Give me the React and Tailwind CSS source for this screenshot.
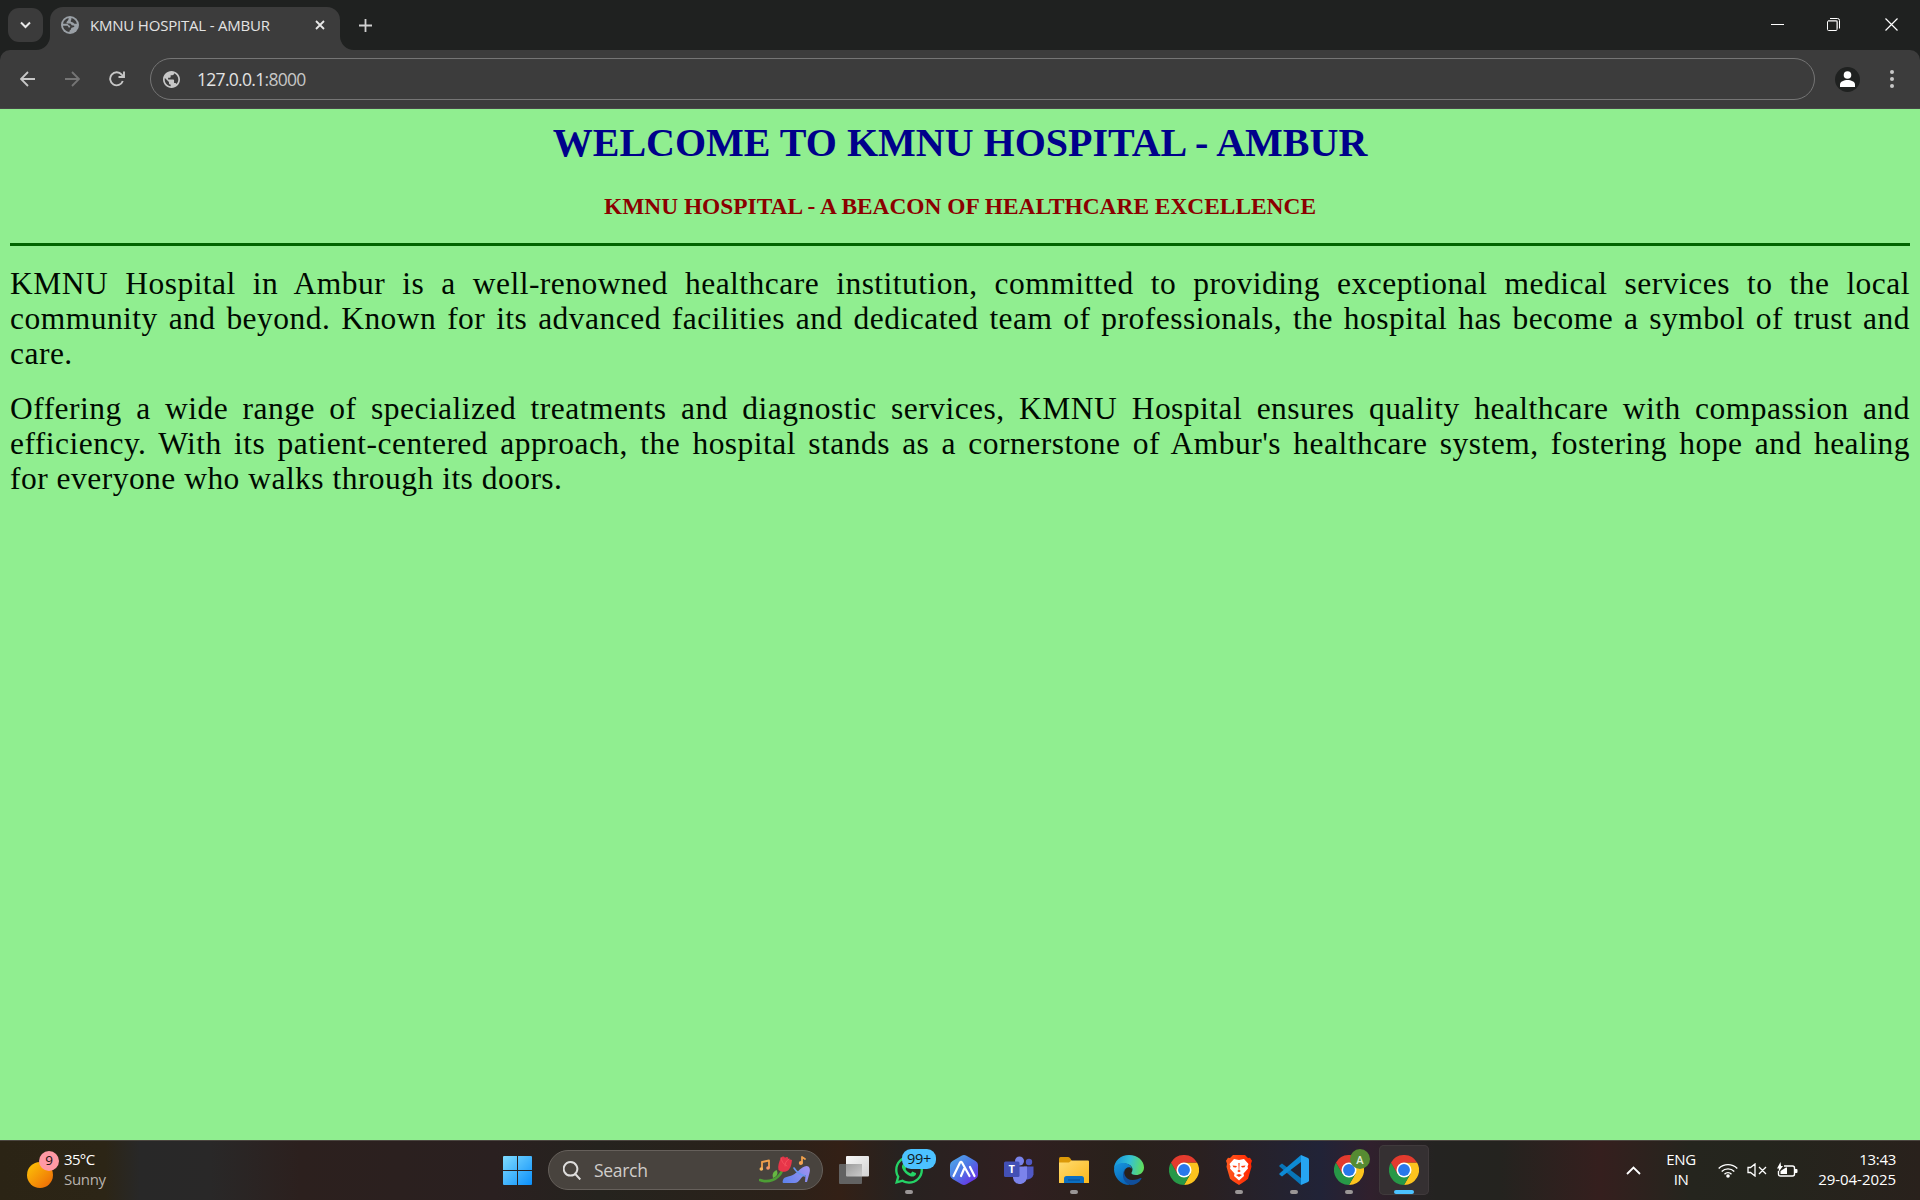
import React from "react";
import { FaWhatsapp } from "react-icons/fa";

const ui = "font-['Open_Sans','Noto_Sans',sans-serif]";

function Globe({ className }) {
  return (
    <svg viewBox="2 2 20 20" className={className} fill="currentColor">
      <path d="M12 2C6.48 2 2 6.48 2 12s4.48 10 10 10 10-4.48 10-10S17.52 2 12 2zm-1 17.93c-3.95-.49-7-3.85-7-7.93 0-.62.08-1.21.21-1.79L9 15v1c0 1.1.9 2 2 2v1.93zm6.9-2.54c-.26-.81-1-1.39-1.9-1.39h-1v-3c0-.55-.45-1-1-1H8v-2h2c.55 0 1-.45 1-1V7h2c1.1 0 2-.9 2-2v-.41c2.93 1.19 5 4.06 5 7.41 0 2.08-.8 3.97-2.1 5.39z" />
    </svg>
  );
}

function TabGlobe() {
  return (
    <svg viewBox="0 0 18 18" className="h-[18px] w-[18px]">
      <circle cx="9" cy="9" r="9" fill="#9aa0a6" />
      <path d="M2 7.800C2.500 4.800 4.700 2.600 7.600 2.100c-.2 1.600-.1 2.300-1.600 3.300-.8.600-.6 1.700.2 2.100H9c1.300 0 1 1.600 2 1.800 1.400.2 2.200.2 2.400 1-.3 1.300-1.800 1-2.800 1.500-.8.500-.3 1.800-1.200 2.300-.7.400-1 .8-1 1.800C4.800 15.600 2.200 12.800 2 9.800h3.500c1.400 0 1.800.600 2 1.700h1.400c.7-.9.200-1.900-.7-2-.900-.2-1.200-1.700-2.300-1.700z" fill="#3c3c3c" />
      <path d="M10.400 2.100c2.800.6 4.900 2.700 5.500 5.600-1.500.3-2.600.2-3.300-.8-.5-.8-1.900-.4-2.700-1.100-.8-.8.900-1.700.5-3.700z" fill="#3c3c3c" />
    </svg>
  );
}

function Stroke({ d, className, box = "0 0 20 20", w = 2 }) {
  return (
    <svg viewBox={box} className={className} fill="none" stroke="currentColor" strokeWidth={w}>
      <path d={d} />
    </svg>
  );
}

function TitleBar() {
  return (
    <div className="flex h-[50px] items-end bg-[#1f2120]">
      <div className="mb-2 ml-2 flex h-[34px] w-[35px] items-center justify-center rounded-[11px] bg-[#3b3b3b] text-[#e8e8e8]">
        <Stroke d="M1 1.500 5.500 6 10 1.500" box="0 0 11 8" className="h-2 w-[11px]" />
      </div>
      <div className="relative ml-[7px] flex h-[43px] w-[290px] items-center rounded-t-[13px] bg-[#3c3c3c] pb-[7px]">
        <svg viewBox="0 0 14 14" className="absolute bottom-0 -left-[14px] h-[14px] w-[14px] fill-[#3c3c3c]"><path d="M14 0A14 14 0 0 1 0 14H14z" /></svg>
        <svg viewBox="0 0 14 14" className="absolute bottom-0 -right-[14px] h-[14px] w-[14px] fill-[#3c3c3c]"><path d="M0 0A14 14 0 0 0 14 14H0z" /></svg>
        <div className="ml-[11px]"><TabGlobe /></div>
        <span className="ml-[11px] w-[215px] whitespace-nowrap text-[15px] leading-5 tracking-[-0.2px] text-[#e3e3e3]">KMNU HOSPITAL - AMBUR</span>
        <Stroke d="M1 1 9 9M9 1 1 9" box="0 0 10 10" w={1.8} className="ml-[10px] h-[10px] w-[10px] text-[#e8e8e8]" />
      </div>
      <Stroke d="M6.500 0V13M0 6.500H13" box="0 0 13 13" w={1.8} className="mb-[18px] ml-[19px] h-[13px] w-[13px] text-[#d0d0d0]" />
      <div className="ml-auto mb-[19px] mr-[22px] flex items-center text-white">
        <div className="h-px w-[13px] bg-white" />
        <svg viewBox="0 0 13 13" className="ml-[43px] h-[13px] w-[13px]" fill="none" stroke="currentColor">
          <path d="M3 .5h7.500a2 2 0 0 1 2 2V10.500" />
          <path d="M10.500 3v7.500M1 2.500h9.500" stroke="#8d8d8d" />
          <rect x=".5" y="3" width="9.500" height="9.500" rx="1" />
        </svg>
        <Stroke d="M.5.5 12.500 12.500M12.500.5.5 12.500" box="0 0 13 13" w={1.2} className="ml-[45px] h-[13px] w-[13px]" />
      </div>
    </div>
  );
}

function Toolbar() {
  return (
    <div className="bg-[#1f2120]">
      <div className="flex h-[59px] items-center rounded-t-[10px] border-b border-[#474747] bg-[#3c3c3c]">
        <Stroke d="M15 8H1.500M8 1 1 8 8 15" box="0 0 16 16" w={1.8} className="ml-5 h-4 w-4 text-[#c7c7c7]" />
        <Stroke d="M1 8H14.500M8 1 15 8 8 15" box="0 0 16 16" w={1.8} className="ml-[28px] h-4 w-4 text-[#757575]" />
        <Stroke d="M13.800 10A6.500 6.500 0 1 1 12.700 3.700L14.600 5.600M15 .5V6H9.500" box="0 0 16 16" w={1.9} className="ml-[29px] h-4 w-4 text-[#c7c7c7]" />
        <div className="ml-[25px] flex h-[42px] w-[1665px] items-center rounded-full border border-[#757575] pl-3 text-[#c7c7c7]">
          <Globe className="h-[17px] w-[17px]" />
          <span className="ml-[17px] text-[17.5px] leading-6 tracking-[-0.7px] text-[#e3e3e3]">127.0.0.1<span className="text-[#c7c7c7]">:8000</span></span>
        </div>
        <div className="ml-5 flex h-[25px] w-[25px] items-center justify-center rounded-full bg-[#1f2120]">
          <svg viewBox="0 0 15 16" className="h-4 w-[15px] fill-white"><circle cx="7.500" cy="4" r="3.800" /><path d="M0 16v-2.500C0 10.500 4 9 7.500 9S15 10.500 15 13.500V16z" /></svg>
        </div>
        <svg viewBox="0 0 4 18" className="ml-[30px] h-[18px] w-1 fill-[#c7c7c7]"><circle cx="2" cy="2" r="2" /><circle cx="2" cy="9" r="2" /><circle cx="2" cy="16" r="2" /></svg>
      </div>
    </div>
  );
}

const paragraphs = [
  [
    "KMNU Hospital in Ambur is a well-renowned healthcare institution, committed to providing exceptional medical services to the local",
    "community and beyond. Known for its advanced facilities and dedicated team of professionals, the hospital has become a symbol of trust and",
    "care.",
  ],
  [
    "Offering a wide range of specialized treatments and diagnostic services, KMNU Hospital ensures quality healthcare with compassion and",
    "efficiency. With its patient-centered approach, the hospital stands as a cornerstone of Ambur's healthcare system, fostering hope and healing",
    "for everyone who walks through its doors.",
  ],
];

function Page() {
  return (
    <main className="h-[1031px] bg-[#90ee90] px-[10px] font-['Liberation_Serif',serif]">
      <h1 className="pt-[11px] text-center text-[40px] font-bold leading-[46px] text-[#00008b]">WELCOME TO KMNU HOSPITAL - AMBUR</h1>
      <h3 className="mt-[27px] text-center text-[23.4px] font-bold leading-[27px] text-[#8b0000]">KMNU HOSPITAL - A BEACON OF HEALTHCARE EXCELLENCE</h3>
      <hr className="mt-[23px] h-[3px] border-0 bg-[#006400]" />
      <div className="flex flex-col gap-5 pt-5">
        {paragraphs.map((lines, i) => (
          <p key={i} className="whitespace-nowrap text-[31.5px] leading-[35px] tracking-[0.48px] text-[#000a00]">
            {lines.map((line, j) => (
              <span key={j} className={j < 2 ? "block text-justify [text-align-last:justify]" : "block"}>{line}</span>
            ))}
          </p>
        ))}
      </div>
    </main>
  );
}

function Chrome() {
  return (
    <svg viewBox="0 0 48 48" className="h-[30px] w-[30px]">
      <path d="M24 12H44.800A24 24 0 0 1 24 48L34.400 30z" fill="#fcc31e" />
      <path d="M13.600 30 3.200 12A24 24 0 0 0 24 48L34.400 30z" fill="#279847" />
      <path d="M3.200 12 13.600 30 24 24V12H44.800A24 24 0 0 0 3.200 12z" fill="#e33b2e" />
      <circle cx="24" cy="24" r="12" fill="#fff" />
      <circle cx="24" cy="24" r="9.500" fill="#2878eb" />
    </svg>
  );
}

function WindowsLogo() {
  return (
    <svg viewBox="0 0 29 29" className="h-[29px] w-[29px]">
      <defs><linearGradient id="win" x1="0" y1="0" x2="29" y2="29" gradientUnits="userSpaceOnUse"><stop stopColor="#7fdcff" /><stop offset="1" stopColor="#0b8ffa" /></linearGradient></defs>
      <path d="M0 1a1 1 0 0 1 1-1h13v14H0zM15 0h13a1 1 0 0 1 1 1v13H15zM0 15h14v14H1a1 1 0 0 1-1-1zM15 15h14v13a1 1 0 0 1-1 1H15z" fill="url(#win)" />
    </svg>
  );
}

function SearchArt() {
  return (
    <svg viewBox="0 0 52 28" className="h-7 w-[52px]" fill="none" strokeLinecap="round" strokeLinejoin="round">
      <defs><linearGradient id="shoe" x1="24" y1="25" x2="50" y2="8" gradientUnits="userSpaceOnUse"><stop stopColor="#5e83ec" /><stop offset="1" stopColor="#a493f2" /></linearGradient></defs>
      <path d="M3 13V6l7-1.500v7" stroke="#f0a14c" strokeWidth="1.800" /><circle cx="2.300" cy="13" r="1.800" fill="#f5b65d" /><circle cx="9" cy="12" r="1.800" fill="#f5956a" />
      <path d="M1 24c8 3 18 0 22-9" stroke="#4d9e35" strokeWidth="2.600" />
      <path d="M14 22c-1-4 0-6 3.500-8 2 3.500 1 6-3.500 8z" fill="#66b942" />
      <path d="M22 1.500c2-1.500 3-1 4 .2C28 .5 29 1 29.500 3l3.500 1c-.5 4-1 8-4 10.500-3 2-7 1.500-9.500-.5-1-4 .5-8 2.500-12.500z" fill="#e73549" />
      <path d="M22 2c1 5 3 6 6 8M30 3c-3 2-4 4-4 7" stroke="#f5505c" strokeWidth="1" />
      <path d="M24 24c1-4 7-3 11.500-6 4.500-3 6.500-7 12-8 3 0 4 3 3 7l-2.500 9h-2l.5-7c-5 1-5.500 8-11 8H24.500q-1.500 0-.5-3z" fill="url(#shoe)" />
      <path d="M35 12c3 5 7 7 11 8" stroke="#6796ef" strokeWidth="1.600" />
      <path d="M43 7V1l3 2" stroke="#f0a14c" strokeWidth="1.800" /><circle cx="41.800" cy="7" r="2" fill="#f5a354" />
    </svg>
  );
}

function TaskView() {
  return (
    <svg viewBox="0 0 30 30" className="h-[30px] w-[30px]">
      <defs>
        <linearGradient id="tv" x2="1" y2="1"><stop stopColor="#f7f7f7" /><stop offset="1" stopColor="#d2d2d2" /></linearGradient>
        <linearGradient id="tvo" x2="1" y2="1"><stop stopColor="#9d9d9d" /><stop offset="1" stopColor="#c9c9c9" /></linearGradient>
      </defs>
      <rect x="7" y="1" width="23" height="20.500" rx="1" fill="url(#tv)" />
      <rect x="0" y="9" width="23" height="20" rx="1" fill="#626262" />
      <path d="M7 9H23v12.500H8q-1 0-1-1z" fill="url(#tvo)" />
    </svg>
  );
}

function HexLogo() {
  return (
    <svg viewBox="0 0 28 30" className="h-[30px] w-7">
      <defs><linearGradient id="hex" x1="0" y1="2" x2="25" y2="28" gradientUnits="userSpaceOnUse"><stop stopColor="#4dabe9" /><stop offset=".5" stopColor="#4e77e5" /><stop offset="1" stopColor="#6b2be5" /></linearGradient></defs>
      <path d="M11.500.8q2.500-1.400 5 0l9 5.200q2.500 1.400 2.500 4v10q0 2.600-2.500 4l-9 5.200q-2.500 1.400-5 0l-9-5.200Q0 22.600 0 20V10q0-2.600 2.500-4z" fill="url(#hex)" />
      <path d="M3.500 21 10 7.500Q11 6 12 7.500L19.500 21M11 21l3-7M20 12l4.500 9" fill="none" stroke="#fff" strokeWidth="2.200" strokeLinecap="round" />
    </svg>
  );
}

function Teams() {
  return (
    <svg viewBox="0 0 30 28" className="h-7 w-[30px]">
      <circle cx="25" cy="6" r="3.200" fill="#5159c5" /><circle cx="15.500" cy="5" r="4.500" fill="#7983eb" />
      <path d="M20 10.500h9.500v8a6 6 0 0 1-8 4.500z" fill="#5159c5" />
      <path d="M9 10.500h14V20a7 7 0 0 1-14 2z" fill="#7b83eb" />
      <rect x="0" y="5.500" width="15.500" height="15.500" rx="1.500" fill="#4350b5" />
      <text x="7.700" y="17.300" textAnchor="middle" fill="#fff" fontSize="11" fontWeight="bold">T</text>
    </svg>
  );
}

function Folder() {
  return (
    <svg viewBox="0 0 30 27" className="h-[27px] w-[30px]">
      <defs><linearGradient id="folder" x2="1" y2="1"><stop stopColor="#ffdb70" /><stop offset="1" stopColor="#fbb81b" /></linearGradient></defs>
      <path d="M0 1.500Q0 0 1.500 0H9q1 0 2 1l2 3v6H0z" fill="#dc9908" />
      <path d="M0 5.500h10l2.500-2H29q1 0 1 1V26H0z" fill="url(#folder)" />
      <path d="M5 26v-4.500Q5 19 7.500 19h15q2.500 0 2.500 2.500V26z" fill="#0b6fc2" /><path d="M9 23h12" stroke="#07529a" strokeWidth="1.200" />
    </svg>
  );
}

function Edge() {
  return (
    <svg viewBox="0 0 30 30" className="h-[30px] w-[30px]">
      <defs>
        <linearGradient id="ed1" x1="0" y1="8" x2="30" y2="14" gradientUnits="userSpaceOnUse"><stop stopColor="#1593dc" /><stop offset=".5" stopColor="#35c1d4" /><stop offset="1" stopColor="#64e052" /></linearGradient>
        <linearGradient id="ed2" x1="0" y1="10" x2="12" y2="30" gradientUnits="userSpaceOnUse"><stop stopColor="#1693dc" /><stop offset="1" stopColor="#0762b5" /></linearGradient>
      </defs>
      <path d="M0 14C0 6 6.500 0 15 0c9 0 15 6 15 12.500 0 5-4 7.500-8 7.500-3.500 0-5-1.200-4.500-2.300C20 14 18 9 11 8.500 5 8.500 1 11 0 14z" fill="url(#ed1)" />
      <path d="M0 14c1-4 5-6.500 10-6 4.500.2 7.500 3 8 6-2-3-7-2-8 3-1 6 4 12 6 13C6 30 0 22 0 14z" fill="url(#ed2)" />
      <path d="M12 13c-4 4-1 12 6.500 12 4 0 6.500-1.500 8-2 .8-.3 1.200.3.8 1C25 28 21 30 16.500 30 8 28 7 17 12 13z" fill="#104f9b" />
    </svg>
  );
}

function Brave() {
  return (
    <svg viewBox="0 0 26 30" className="h-[30px] w-[26px]">
      <defs><linearGradient id="br" x2="1"><stop stopColor="#ff5a1f" /><stop offset="1" stopColor="#ff2500" /></linearGradient></defs>
      <path d="m7 0h12l3 3 2-.2 2 3-1 3 .5 3-3.500 12Q21 25 13 30 5 25 4 23.800L.5 11.800l.5-3-1-3 2-3 2 .2z" fill="url(#br)" />
      <path d="m8 4 5 1 5-1 4.500 5-1 2.500.5 2-4.500 5 .5 2.500-5 4.500-5-4.500.5-2.500L4 13.500l.5-2-1-2.500z" fill="#fff" />
      <path d="m6.500 10.500 4.500.5-1 1.500-2.500-.3zM19.500 10.500l-4.500.5 1 1.500 2.500-.3zM12.400 8h1.200l-.3 7 1.500 1-1.800 1.200-1.800-1.200 1.500-1zM10 20l3-1 3 1-3 2z" fill="#ff3b0c" />
    </svg>
  );
}

function Code() {
  return (
    <svg viewBox="0 0 30 30" className="h-[30px] w-[30px]">
      <path d="M.7 10.300 3 8.500 22 23v7L.7 11.800q-.8-.8 0-1.500z" fill="#0875b9" />
      <path d="M.7 19.700 3 21.500 22 7V0L.7 18.200q-.8.800 0 1.500z" fill="#0d8ad5" />
      <path d="M22 0l7 3q1 .5 1 1.700v20.600q0 1.200-1 1.700l-7 3z" fill="#26a5f1" />
    </svg>
  );
}

function TaskItem({ children, dot, active }) {
  return (
    <div className={active ? "relative flex h-[50px] w-[50px] items-center justify-center rounded-[5px] bg-[#353032] ring-1 ring-inset ring-[#403a3c]" : "relative flex h-[50px] w-[50px] items-center justify-center"}>
      {children}
      {dot && <div className={active ? "absolute bottom-[1px] h-1 w-5 rounded-full bg-[#4cc2ff]" : "absolute bottom-[1px] h-1 w-2 rounded-full bg-[#9a9696]"} />}
    </div>
  );
}

function Taskbar() {
  return (
    <footer className="flex h-[60px] items-center bg-[linear-gradient(90deg,#2b2415_0px,#2c2516_105px,#282828_140px,#292828_210px,#2c201e_300px,#2a2020_495px,#25231e_600px,#2b2119_780px,#332016_840px,#272220_900px,#301f20_1020px,#29211b_1120px,#2a2020_1200px,#212337_1320px,#30202d_1370px,#242321_1435px,#24231f_1500px,#351f1e_1600px,#25251e_1690px,#24251d_1760px,#29211c_1920px)] shadow-[inset_0_1px_0_#4b4640]">
      <div className="flex w-[492px] items-center">
        <div className="relative ml-[27px] h-[34px] w-[37px]">
          <div className="absolute left-0 top-[9px] h-[26px] w-[26px] rounded-full bg-linear-to-br from-[#fcc706] to-[#ea6206]" />
          <div className="absolute left-[12px] top-[-2px] flex h-5 w-5 items-center justify-center rounded-full bg-[#ff99a4] text-[13.5px] leading-none text-[#1b1010]">9</div>
        </div>
        <div className="-mt-[3px] text-[15px] leading-5 tracking-[-0.65px] text-white"><div>35°C</div><div className="tracking-[-0.3px] text-[#b8b3ae]">Sunny</div></div>
      </div>
      <div className="flex items-center gap-[5px]">
        <div className="flex h-[50px] w-[51px] items-center justify-center pt-px"><WindowsLogo /></div>
        <div className="mr-px flex h-10 w-[275px] items-center rounded-full border border-[#66605b] bg-[#48433e] pl-[14px]">
          <Stroke d="M7.500 1a6.800 6.800 0 1 0 .01 0M12.300 13l5 5.500" box="0 0 18 19" w={2} className="h-[19px] w-[18px] text-[#dedddc]" />
          <span className="ml-[13px] w-[165px] text-[17.5px] tracking-[-0.3px] text-[#d0cdca]">Search</span>
          <SearchArt />
        </div>
        <TaskItem><TaskView /></TaskItem>
        <TaskItem dot>
          <FaWhatsapp className="h-[32px] w-[32px] text-[#25d366]" />
          <div className="absolute left-[18px] top-1 flex h-5 w-[34px] items-center justify-center rounded-[9px] bg-[#4cc2ff] text-[14.5px] leading-none tracking-[-0.3px] text-[#101820]">99+</div>
        </TaskItem>
        <TaskItem><HexLogo /></TaskItem>
        <TaskItem><Teams /></TaskItem>
        <TaskItem dot><Folder /></TaskItem>
        <TaskItem><Edge /></TaskItem>
        <TaskItem><Chrome /></TaskItem>
        <TaskItem dot><Brave /></TaskItem>
        <TaskItem dot><Code /></TaskItem>
        <TaskItem dot>
          <Chrome />
          <div className="absolute left-[26px] top-1 flex h-5 w-5 items-center justify-center rounded-full bg-[#568b32] text-[11px] font-semibold leading-none text-[#e4ecdc]">A</div>
        </TaskItem>
        <TaskItem dot active><Chrome /></TaskItem>
      </div>
      <div className="ml-auto mr-6 flex items-center text-white">
        <Stroke d="M1 8 7.500 1.500 14 8" box="0 0 15 9" w={1.8} className="mr-[24px] h-[9px] w-[15px]" />
        <div className="-mt-[3px] w-[32px] text-center text-[15px] leading-5 tracking-[-0.4px]"><div>ENG</div><div>IN</div></div>
        <svg viewBox="0 0 20 16" className="ml-[21px] h-4 w-5" fill="none" stroke="currentColor" strokeWidth="1.400"><path d="M.7 6.500a13.200 13.200 0 0 1 18.600 0M3.700 9.400a9 9 0 0 1 12.600 0M6.500 12.200a5 5 0 0 1 7 0" /><circle cx="10" cy="14" r="1.800" fill="currentColor" stroke="none" /></svg>
        <svg viewBox="0 0 20 14" className="ml-[9px] h-[14px] w-5" fill="none" stroke="currentColor" strokeWidth="1.300"><path d="M1 4.500h2.500L8 1v12L3.500 9.500H1zM12 4l7 7M19 4l-7 7" /></svg>
        <svg viewBox="0 0 21 16" className="ml-[10px] h-4 w-[21px]" fill="none" stroke="currentColor" strokeWidth="1.400"><path d="M7 4h8.500q2 0 2 2v6q0 2-2 2H3.500q-2 0-2-2V9" /><path d="M18 7h1.500q1 0 1 1v2q0 1-1 1H18zM3.500 12V9L9 5.500h1V12zM3.500 0 0 6.500h2L1.500 10l4.500-6H4z" fill="currentColor" stroke="none" /></svg>
        <div className="-mt-[3px] w-[98px] text-right text-[15px] leading-5 tracking-[-0.05px]"><div className="tracking-[-0.3px]">13:43</div><div>29-04-2025</div></div>
      </div>
    </footer>
  );
}

export default function App() {
  return (
    <div className={`h-[1200px] w-[1920px] overflow-hidden ${ui}`}>
      <TitleBar />
      <Toolbar />
      <Page />
      <Taskbar />
    </div>
  );
}
